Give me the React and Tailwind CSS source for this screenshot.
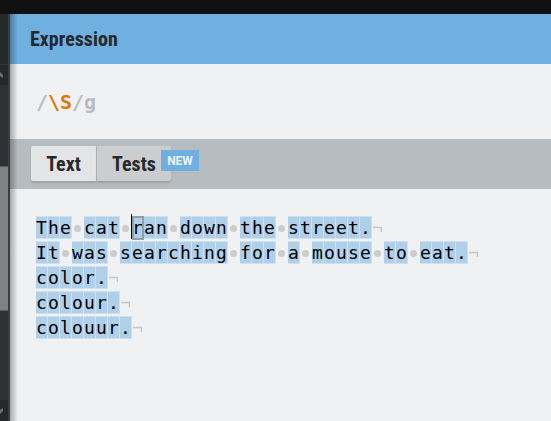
const lines = [
  'The cat ran down the street.',
  'It was searching for a mouse to eat.',
  'color.',
  'colour.',
  'colouur.',
];

const mono = "font-['DejaVu_Sans_Mono',monospace]";

function Space() {
  return (
    <span className="relative h-[23px] w-3 shrink-0 leading-[21px]">
      {' '}
      <span className="absolute top-[9px] left-[2px] size-[7px] rounded-full bg-[#cccccd]" />
    </span>
  );
}

function Match({ char, focused }) {
  return (
    <span className="relative h-[23px] w-3 shrink-0 border border-l-0 border-[#cfe1ef] bg-[#b0d0ea] text-center leading-[21px]">
      {char}
      {focused && (
        <>
          <span className="absolute -top-px left-0 h-[24px] w-3 inset-ring-2 inset-ring-[#929da6]" />
          <span className="absolute -top-[3px] -left-px h-[25px] w-px bg-black" />
        </>
      )}
    </span>
  );
}

function Line({ text, focusedIndex }) {
  return (
    <div className="flex h-[25px] items-start whitespace-pre">
      {[...text].map((char, i) =>
        char === ' ' ? <Space key={i} /> : <Match key={i} char={char} focused={i === focusedIndex} />
      )}
      <svg className="mt-[10px] ml-px h-2 w-[10px]" viewBox="0 0 10 8" aria-hidden="true">
        <path d="M0 1.5H8.3V6" fill="none" stroke="#c6c6c7" strokeWidth="1.4" />
      </svg>
    </div>
  );
}

const tokens = [
  { char: '/', color: 'text-[#b8bcbf]' },
  { char: '\\', color: 'text-[#e07800]' },
  { char: 'S', color: 'text-[#e07800]' },
  { char: '/', color: 'text-[#b8bcbf]' },
  { char: 'g', color: 'text-[#b8bcbf]' },
];

function Sidebar() {
  return (
    <aside className="flex w-[10px] shrink-0 flex-col border-r-2 border-[#3b3d42] bg-[#2d3134]">
      <div className="h-[50px] bg-[#26292b]" />
      <div className="flex h-[21px] items-center border-t border-[#35383b] bg-[#25272a]">
        <svg className="h-[6px] w-1" viewBox="0 0 4 6" aria-hidden="true">
          <path d="M0 0L3 3V6L0 4Z" fill="#6d6f71" />
        </svg>
      </div>
      <div className="h-[81px]" />
      <div className="h-[145px] border-y border-[#5a5c5e] bg-[#808183]" />
      <div className="grow" />
      <div className="flex h-[21px] items-center bg-[#25272a]">
        <svg className="h-[6px] w-1" viewBox="0 0 4 6" aria-hidden="true">
          <path d="M0 6L3 3V0L0 2Z" fill="#6d6f71" />
        </svg>
      </div>
    </aside>
  );
}

export default function App() {
  return (
    <div className="flex min-h-screen flex-col bg-[#eff1f3] font-['Roboto_Condensed','Roboto',sans-serif] text-[#25292c]">
      <div className="h-[14px] shrink-0 bg-[#0f1112]" />
      <div className="flex grow">
        <Sidebar />
        <main className="relative min-w-0 grow overflow-hidden">
          <header className="flex h-[50px] items-center bg-[#70b0e0] px-5">
            <h1 className="text-xl font-bold">Expression</h1>
          </header>
          <section className={`flex h-[75px] items-center px-[26px] pt-px text-xl font-bold ${mono}`}>
            {tokens.map(({ char, color }, i) => (
              <span key={i} className={`w-3 ${color}`}>
                {char}
              </span>
            ))}
          </section>
          <nav className="flex h-[50px] items-start bg-[#b7bcc0] px-5 pt-[7px] text-xl font-bold">
            <button className="ml-px h-[35px] w-[65px] rounded-l-xs bg-[#e3e4e5] shadow-[0_2px_2px_#9da3a7]">Text</button>
            <button className="relative ml-px h-[35px] w-[74px] rounded-r-xs bg-[#cbcdcf] shadow-[0_2px_2px_#9da3a7]">
              Tests
              <span className="absolute top-1 left-16 flex h-[21px] w-[38px] items-center justify-center bg-[#70b0e0] font-['Roboto',sans-serif] text-xs text-[#eff1f3]">
                NEW
              </span>
            </button>
          </nav>
          <section className={`px-[26px] pt-[27px] text-lg text-black ${mono}`}>
            {lines.map((text, i) => (
              <Line key={text} text={text} focusedIndex={i === 0 ? 8 : -1} />
            ))}
          </section>
          <div className="pointer-events-none absolute inset-y-0 left-0 w-2 bg-linear-to-r from-black/30 to-transparent" />
        </main>
      </div>
    </div>
  );
}
